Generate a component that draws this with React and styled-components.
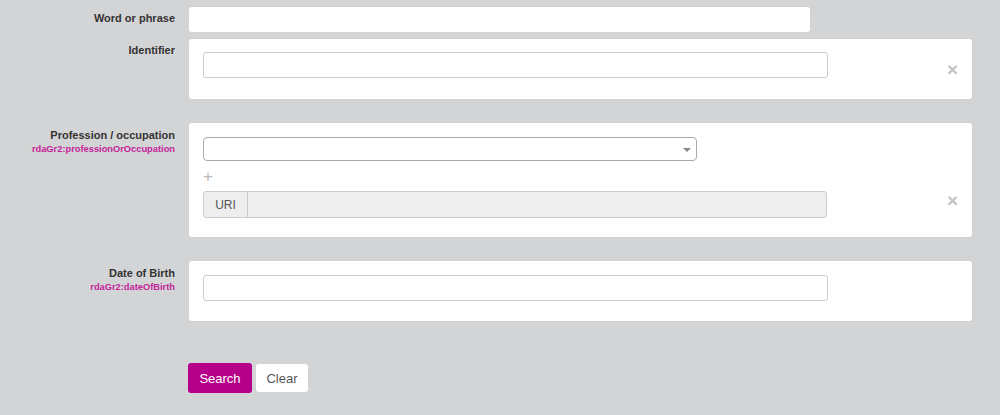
import React from 'react';
import styled, { createGlobalStyle } from 'styled-components';

const GlobalStyle = createGlobalStyle`
  html, body {
    margin: 0;
    padding: 0;
    background: #d3d4d6;
    font-family: "Liberation Sans", Arial, sans-serif;
  }
`;

const Page = styled.div`
  width: 1000px;
  height: 415px;
  padding-top: 7px;
  box-sizing: border-box;
  background: #d3d4d6;
  overflow: hidden;
`;

const Row = styled.div`
  display: grid;
  grid-template-columns: 175px 1fr;
  column-gap: 14px;
  padding-right: 28px;
  margin-bottom: ${p => p.$gap || 0}px;
`;

const LabelCol = styled.div`
  display: flex;
  flex-direction: column;
  align-items: flex-end;
  padding-top: ${p => p.$top || 5}px;
`;

const Label = styled.div`
  font-size: 11px;
  font-weight: bold;
  color: #333;
  line-height: 14px;
`;

const SubLabel = styled.div`
  font-size: 9.3px;
  font-weight: bold;
  color: #c4239a;
  line-height: 14px;
`;

const PlainInput = styled.div`
  width: 621px;
  height: 25px;
  background: #fff;
  border-radius: 3px;
`;

const Card = styled.div`
  display: flex;
  background: #fff;
  border-radius: 3px;
  padding: ${p => p.$pad || '13px 0 21px 14px'};
`;

const Fields = styled.div`
  display: flex;
  flex-direction: column;
  width: 625px;
`;

const TextInput = styled.div`
  height: 26px;
  box-sizing: border-box;
  border: 1px solid #ccc;
  border-radius: 3px;
  background: #fff;
`;

const Select = styled.div`
  width: 494px;
  height: 24px;
  box-sizing: border-box;
  border: 1px solid #aaa;
  border-radius: 4px;
  position: relative;
  background: #fff;
`;

const Caret = styled.span`
  position: absolute;
  right: 5px;
  top: 10px;
  width: 0;
  height: 0;
  border-left: 4px solid transparent;
  border-right: 4px solid transparent;
  border-top: 4px solid #888;
`;

const Plus = styled.div`
  height: 30px;
  display: flex;
  align-items: center;
  padding-left: 0;
  color: #bbb;
  font-size: 17px;
  line-height: 1;
`;

const Group = styled.div`
  display: flex;
  height: 27px;
  box-sizing: border-box;
  border: 1px solid #ccc;
  border-radius: 3px;
  background: #eee;
  width: 624px;
`;

const Addon = styled.div`
  width: 43px;
  border-right: 1px solid #ccc;
  display: flex;
  align-items: center;
  justify-content: center;
  font-size: 12px;
  color: #555;
`;

const Remove = styled.div`
  margin-left: auto;
  margin-right: 14px;
  margin-top: ${p => p.$top}px;
  height: 12px;
  color: #c2c2c2;
  font-size: 19px;
  font-weight: bold;
  line-height: 12px;
`;

const Actions = styled.div`
  display: flex;
  align-items: center;
  gap: 4px;
  padding-left: 188px;
`;

const Button = styled.button`
  font-family: "Liberation Sans", Arial, sans-serif;
  font-size: 13px;
  border: none;
  border-radius: 3px;
  padding: 0;
  height: ${p => (p.$primary ? 30 : 28)}px;
  width: ${p => (p.$primary ? 64 : 52)}px;
  background: ${p => (p.$primary ? '#b6008a' : '#fff')};
  color: ${p => (p.$primary ? '#fff' : '#555')};
`;

function RemoveX({ top }) {
  return <Remove $top={top}>×</Remove>;
}

export default function App() {
  return (
    <Page>
      <GlobalStyle />
      <Row $gap={7}>
        <LabelCol $top={4}>
          <Label>Word or phrase</Label>
        </LabelCol>
        <div>
          <PlainInput />
        </div>
      </Row>

      <Row $gap={24}>
        <LabelCol $top={4}>
          <Label>Identifier</Label>
        </LabelCol>
        <Card>
          <Fields>
            <TextInput />
          </Fields>
          <RemoveX top={12} />
        </Card>
      </Row>

      <Row $gap={24}>
        <LabelCol>
          <Label>Profession / occupation</Label>
          <SubLabel>rdaGr2:professionOrOccupation</SubLabel>
        </LabelCol>
        <Card $pad="14px 0 19px 14px">
          <Fields>
            <Select>
              <Caret />
            </Select>
            <Plus>+</Plus>
            <Group>
              <Addon>URI</Addon>
            </Group>
          </Fields>
          <RemoveX top={58} />
        </Card>
      </Row>

      <Row $gap={42}>
        <LabelCol>
          <Label>Date of Birth</Label>
          <SubLabel>rdaGr2:dateOfBirth</SubLabel>
        </LabelCol>
        <Card $pad="14px 0 20px 14px">
          <Fields>
            <TextInput />
          </Fields>
        </Card>
      </Row>

      <Actions>
        <Button $primary>Search</Button>
        <Button>Clear</Button>
      </Actions>
    </Page>
  );
}
